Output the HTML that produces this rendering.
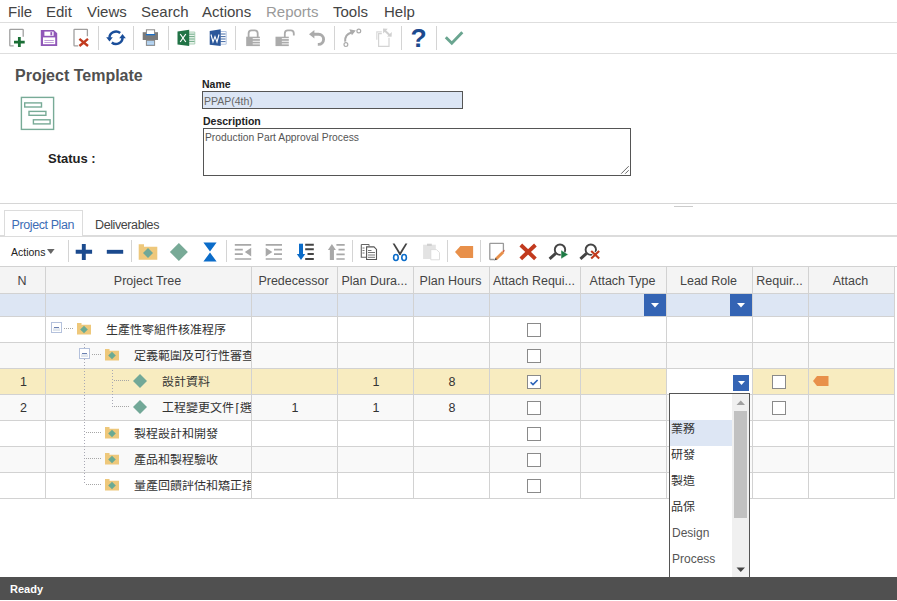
<!DOCTYPE html>
<html lang="zh-TW"><head><meta charset="utf-8">
<style>
*{margin:0;padding:0;box-sizing:border-box}
html,body{width:897px;height:601px;overflow:hidden;background:#fff;font-family:"Liberation Sans",sans-serif;color:#444}
.a{position:absolute}
.t{position:absolute;white-space:nowrap;line-height:1}
.hl{position:absolute;height:1px;background:#dcdcdc}
.vl{position:absolute;width:1px;background:#d0d0d0}
.sep{position:absolute;width:1px;background:#d4d4d4}
svg{position:absolute;overflow:visible}
.cb{position:absolute;width:14px;height:14px;border:1.5px solid #8a8a8a;background:#fff}
.cj{position:absolute;white-space:nowrap;line-height:1;font-size:12px;color:#333;overflow:hidden;font-weight:300}
</style></head><body>

<div class="t" style="left:8px;top:4px;font-size:15px;color:#444">File</div>
<div class="t" style="left:46px;top:4px;font-size:15px;color:#444">Edit</div>
<div class="t" style="left:87px;top:4px;font-size:15px;color:#444">Views</div>
<div class="t" style="left:141px;top:4px;font-size:15px;color:#444">Search</div>
<div class="t" style="left:202px;top:4px;font-size:15px;color:#444">Actions</div>
<div class="t" style="left:266px;top:4px;font-size:15px;color:#9a9a9a">Reports</div>
<div class="t" style="left:333px;top:4px;font-size:15px;color:#444">Tools</div>
<div class="t" style="left:384px;top:4px;font-size:15px;color:#444">Help</div>
<div class="hl" style="left:0;top:22px;width:897px;background:#dedede"></div>
<div class="sep" style="left:98px;top:26px;height:24px"></div>
<div class="sep" style="left:133px;top:26px;height:24px"></div>
<div class="sep" style="left:168px;top:26px;height:24px"></div>
<div class="sep" style="left:235px;top:26px;height:24px"></div>
<div class="sep" style="left:334px;top:26px;height:24px"></div>
<div class="sep" style="left:401px;top:26px;height:24px"></div>
<div class="sep" style="left:436px;top:26px;height:24px"></div>

<svg style="left:0;top:0" width="897" height="60">
<!-- new -->
<path d="M13.7 45.8 H10.4 Q9.8 45.8 9.8 45.2 V29.9 Q9.8 29.3 10.4 29.3 H22.6 Q23.2 29.3 23.2 29.9 V36.7" fill="none" stroke="#a0a0a0" stroke-width="1.3"/>
<path d="M14 42.1 H24.7 M19.35 37 V46.9" stroke="#1a6e35" stroke-width="2.8"/>
<!-- save -->
<path d="M40.8 30 H53.8 L57.2 33.2 V46 H40.8 Z" fill="#9058b8"/>
<rect x="44.4" y="31.6" width="9.2" height="4.2" fill="#fff"/>
<rect x="50.4" y="32.1" width="1.8" height="3.2" fill="#9058b8"/>
<rect x="43" y="37.4" width="12.2" height="6.8" fill="#fff"/>
<path d="M44.4 40.5 H53.8 M44.4 42.5 H53.8" stroke="#c0a0d8" stroke-width="1"/>
<!-- close -->
<path d="M78.2 45.8 H74.6 Q74 45.8 74 45.2 V29.9 Q74 29.3 74.6 29.3 H86.8 Q87.4 29.3 87.4 29.9 V36.3" fill="none" stroke="#a0a0a0" stroke-width="1.3"/>
<path d="M79.4 38.8 L88 46 M88 38.8 L79.4 46" stroke="#c23a1e" stroke-width="2.4"/>
<!-- sync -->
<path d="M120.2 32.95 A6.5 6.2 0 0 0 109.5 37.7" fill="none" stroke="#1a4e9a" stroke-width="2.5"/>
<path d="M106.2 37.2 L112.8 37.2 L109.5 41.6 Z" fill="#1a4e9a"/>
<path d="M111.8 42.45 A6.5 6.2 0 0 0 122.5 37.7" fill="none" stroke="#1a4e9a" stroke-width="2.5"/>
<path d="M119.2 38.2 L125.8 38.2 L122.5 33.9 Z" fill="#1a4e9a"/>
<!-- printer -->
<rect x="142.7" y="32.2" width="15.3" height="7.8" fill="#7a7a7a"/>
<rect x="146.4" y="29.8" width="8.2" height="5" fill="#fff" stroke="#8a8a8a" stroke-width="1"/>
<rect x="145.9" y="34" width="9.2" height="1.3" fill="#1a6fc8"/>
<rect x="146.4" y="40.4" width="8.2" height="5" fill="#8ebbe6" stroke="#8a8a8a" stroke-width="1"/>
<path d="M147 42 H154 M147 43.8 H154" stroke="#fff" stroke-width="0.6"/>
<!-- excel -->
<path d="M188.5 32 H194.8 V44 H188.5 Z" fill="#e9f3ec" stroke="#9cc7ab" stroke-width="0.8"/>
<path d="M189 34.2 H194.5 M189 36.6 H194.5 M189 39 H194.5 M189 41.4 H194.5" stroke="#5fa27a" stroke-width="0.9"/>
<path d="M177.5 31.4 L189.2 29.7 V46 L177.5 44.4 Z" fill="#217346"/>
<path d="M180.2 34 L185.8 42 M185.8 34 L180.2 42" stroke="#fff" stroke-width="1.2"/>
<!-- word -->
<path d="M220 31.5 H226.2 V44.2 H220 Z" fill="#fff" stroke="#9fb6dc" stroke-width="0.8"/>
<path d="M220.5 34 H225.5 M220.5 36.6 H225.5 M220.5 39 H225.5 M220.5 41.6 H225.5" stroke="#2b579a" stroke-width="0.9"/>
<path d="M209.7 31 L220.7 29.3 V46 L209.7 44.7 Z" fill="#2b579a"/>
<path d="M211 34.5 L213 42 L215 36.5 L217 42 L219 34.5" fill="none" stroke="#fff" stroke-width="1.1"/>
<!-- lock -->
<path d="M248.6 37 V33.4 Q248.6 30.4 251.6 30.4 H254.7 Q257.7 30.4 257.7 33.4 V37" fill="none" stroke="#ababab" stroke-width="1.8"/>
<rect x="246.2" y="36.7" width="13.7" height="9.4" fill="#ababab"/>
<path d="M252.7 38.6 H260 M252.7 41.3 H260 M252.7 43.9 H260" stroke="#fff" stroke-width="0.9"/>
<!-- unlock -->
<path d="M284.8 37 V33.4 Q284.8 30.4 287.8 30.4 H290.8 Q293.8 30.4 293.8 33.4 V35.4" fill="none" stroke="#ababab" stroke-width="1.8"/>
<rect x="275.5" y="36.7" width="13.3" height="9.4" fill="#ababab"/>
<path d="M281.8 38.6 H289 M281.8 41.3 H289 M281.8 43.9 H289" stroke="#fff" stroke-width="0.9"/>
<!-- undo -->
<path d="M313 34.2 H318.5 A5.1 5.1 0 0 1 318.5 44.4 H317.8" fill="none" stroke="#ababab" stroke-width="2.9"/>
<path d="M309 34.2 L314.4 30 V38.4 Z" fill="#ababab"/>
<!-- redo link -->
<circle cx="345.9" cy="44.6" r="1.9" fill="none" stroke="#ababab" stroke-width="1.2"/>
<circle cx="358.8" cy="31" r="1.9" fill="none" stroke="#ababab" stroke-width="1.2"/>
<path d="M345.2 41.6 Q344.6 34.6 351.4 32.6" fill="none" stroke="#ababab" stroke-width="2.1"/>
<path d="M349.3 29.2 L355.8 30.4 L351.9 35.3 Z" fill="#ababab"/>
<!-- paste-like disabled -->
<path d="M376.8 39.8 V31.8 H381.8" fill="none" stroke="#dadada" stroke-width="1.2"/>
<path d="M381.8 33.6 H378.6 V46.4 H389 V37.8" fill="none" stroke="#d4d4d4" stroke-width="1.2"/>
<path d="M384.5 30.2 L390 35.5" stroke="#d0d0d0" stroke-width="2"/>
<path d="M383 28.6 L387.8 28.8 L383.2 33.4 Z M391.8 32 L391.6 36.8 L387 36.6 Z" fill="#d0d0d0"/>
<!-- check -->
<path d="M445.8 37.2 L451.8 43.2 L462.3 32.2" fill="none" stroke="#6aa590" stroke-width="2.9"/>
</svg>
<div class="t" style="left:410.5px;top:25px;font-size:26.5px;font-weight:bold;color:#1c4a8e">?</div>

<div class="hl" style="left:0;top:53px;width:897px;background:#dedede"></div>

<div class="t" style="left:15px;top:68px;font-size:16px;font-weight:bold;color:#505050">Project Template</div>
<svg style="left:0;top:0" width="60" height="140">
<rect x="21.4" y="97.4" width="32.2" height="32" fill="none" stroke="#78ab97" stroke-width="1.4"/>
<rect x="24.7" y="102.9" width="16.8" height="4.1" fill="none" stroke="#78ab97" stroke-width="1.4"/>
<rect x="29" y="111.4" width="16.9" height="3.9" fill="none" stroke="#78ab97" stroke-width="1.4"/>
<rect x="33.4" y="119.8" width="16.7" height="4.1" fill="none" stroke="#78ab97" stroke-width="1.4"/>
</svg>
<div class="t" style="left:48px;top:152px;font-size:13px;font-weight:bold;color:#222">Status :</div>
<div class="t" style="left:202px;top:79px;font-size:10.5px;font-weight:bold;color:#222">Name</div>
<div class="a" style="left:202px;top:91px;width:261px;height:18px;background:#dce6f5;border:1px solid #555"></div>
<div class="t" style="left:204px;top:96px;font-size:10.5px;color:#666">PPAP(4th)</div>
<div class="t" style="left:203px;top:116px;font-size:10.5px;font-weight:bold;color:#222">Description</div>
<div class="a" style="left:203px;top:128px;width:428px;height:48px;background:#fff;border:1px solid #555"></div>
<svg style="left:620px;top:165px" width="10" height="10"><path d="M1.2 8.7 L8.7 1.2 M5.2 8.7 L8.7 5.2" stroke="#666" stroke-width="1"/></svg>
<div class="t" style="left:205px;top:133px;font-size:10.3px;color:#555">Production Part Approval Process</div>
<div class="hl" style="left:0;top:203px;width:897px;background:#d6d6d6"></div>
<div class="hl" style="left:674px;top:206px;width:19px;background:#ccc"></div>


<div class="a" style="left:4px;top:210px;width:79px;height:27px;border:1px solid #dcdcdc;border-bottom:none;background:#fff"></div>
<div class="t" style="left:11.5px;top:219px;font-size:12.5px;letter-spacing:-0.4px;color:#3d6db5">Project Plan</div>
<div class="t" style="left:95px;top:219px;font-size:12.5px;letter-spacing:-0.4px;color:#444">Deliverables</div>
<div class="a" style="left:0;top:235px;width:897px;height:2px;background:#dcdcdc"></div>
<div class="a" style="left:5px;top:235px;width:77px;height:1px;background:#fff"></div>

<div class="t" style="left:11px;top:247px;font-size:10.5px;color:#222">Actions</div>
<div class="sep" style="left:68px;top:240px;height:22px"></div>
<div class="sep" style="left:131px;top:240px;height:22px"></div>
<div class="sep" style="left:226px;top:240px;height:22px"></div>
<div class="sep" style="left:352px;top:240px;height:22px"></div>
<div class="sep" style="left:447px;top:240px;height:22px"></div>
<div class="sep" style="left:480px;top:240px;height:22px"></div>

<svg style="left:0;top:0" width="897" height="270">
<path d="M47 249 H54.6 L50.8 254 Z" fill="#666"/>
<!-- plus minus -->
<path d="M75.7 251.8 H92.1 M83.8 244 V260" stroke="#1b4a8e" stroke-width="3.9"/>
<path d="M106.8 251.8 H123.2" stroke="#1b4a8e" stroke-width="3.9"/>
<!-- folder -->
<path d="M138.7 244.3 H144 V246.7 H157.3 V259.7 H138.7 Z" fill="#eec87b"/>
<path d="M148 248 L153 253 L148 258 L143 253 Z" fill="#6fa898"/>
<!-- diamond -->
<path d="M178.9 243 L187.9 252 L178.9 261 L169.9 252 Z" fill="#78aa97"/>
<!-- hourglass -->
<path d="M203.4 242.5 H216.6 L210 251.4 Z M210 252.6 L216.6 261.5 H203.4 Z" fill="#0b6cc9"/>
<!-- outdent -->
<path d="M234.8 244.9 H251.2 M234.8 249.7 H242.8 M234.8 254.2 H242.8 M234.8 259 H251.2" stroke="#a8a8a8" stroke-width="1.7"/>
<path d="M244.8 252 L251.2 247.7 V256.4 Z" fill="#a8a8a8"/>
<!-- indent -->
<path d="M265.7 244.9 H282 M274 249.7 H282 M274 254.2 H282 M265.7 259 H282" stroke="#a8a8a8" stroke-width="1.7"/>
<path d="M272.4 252 L265.7 247.7 V256.4 Z" fill="#a8a8a8"/>
<!-- move down -->
<path d="M301 243.7 V255" stroke="#0b6cc9" stroke-width="4"/>
<path d="M296.8 254 H305.2 L301 260 Z" fill="#0b6cc9"/>
<path d="M305.2 244.8 H313.8 M305.2 249.2 H313.8 M307.5 254 H313.8 M305.2 259 H313.8" stroke="#444" stroke-width="1.9"/>
<!-- move up -->
<path d="M331.9 249 V260" stroke="#a8a8a8" stroke-width="4.1"/>
<path d="M327.9 250 H335.9 L331.9 244.1 Z" fill="#a8a8a8"/>
<path d="M336.4 244.8 H344.7 M338.5 249.6 H344.7 M336.4 254.3 H344.7 M336.4 259 H344.7" stroke="#a8a8a8" stroke-width="1.7"/>
<!-- copy -->
<path d="M361.3 244.5 H368.5 L369.5 245.5 M361.3 244.5 V257.2 H366" fill="none" stroke="#666" stroke-width="1.1"/>
<path d="M362.5 248 H364.5 M362.5 250.5 H364.5 M362.5 253 H364.5" stroke="#666" stroke-width="0.9"/>
<path d="M366.6 246.9 H374 L376.5 249.4 V259.5 H366.6 Z" fill="#fff" stroke="#555" stroke-width="1.1"/>
<path d="M368 250.5 H371.5 M368 252.5 H375 M368 255 H375 M368 257.3 H375" stroke="#666" stroke-width="0.9"/>
<!-- scissors -->
<path d="M392.6 243.6 L394.6 243.4 L401.2 254.2 L399.6 255.2 Z" fill="#444"/>
<path d="M407.4 243.6 L405.4 243.4 L398.8 254.2 L400.4 255.2 Z" fill="#444"/>
<ellipse cx="395.9" cy="257.5" rx="2.3" ry="3" fill="none" stroke="#0b6cc9" stroke-width="1.6"/>
<ellipse cx="404.1" cy="257.5" rx="2.3" ry="3" fill="none" stroke="#0b6cc9" stroke-width="1.6"/>
<!-- paste disabled -->
<rect x="423.1" y="244.7" width="12.7" height="14.3" fill="#e3e3e3"/>
<rect x="427" y="243.7" width="4.8" height="2.3" fill="#d0d0d0"/>
<path d="M430.8 249.6 H436.5 L439.5 252.6 V259.8 H430.8 Z" fill="#fff" stroke="#dadada" stroke-width="0.9"/>
<!-- tag -->
<path d="M455 252 L460.4 246 H473.1 V257.9 H460.4 Z" fill="#e8904a"/>
<!-- edit -->
<path d="M494.5 259.5 H490.2 Q489.8 259.5 489.8 259.1 V243.8 Q489.8 243.4 490.2 243.4 H503 Q503.4 243.4 503.4 243.8 V250" fill="none" stroke="#9a9a9a" stroke-width="1.3"/>
<path d="M495.8 259.2 L503.2 252" stroke="#e8904a" stroke-width="2.9"/>
<path d="M502.4 250.8 L504.6 249.8 L504 252.5 Z" fill="#c0391b"/>
<path d="M494.3 260.4 L495.8 257.8 L497 259.4 Z" fill="#444"/>
<!-- red x -->
<path d="M520.8 245 L535.4 258.8 M535.4 245 L520.8 258.8" stroke="#c23a1e" stroke-width="3.9"/>
<!-- search go -->
<circle cx="560" cy="249.7" r="5.2" fill="none" stroke="#444" stroke-width="1.9"/>
<path d="M549.6 258.8 L555.8 253.4" stroke="#444" stroke-width="3"/>
<path d="M561 250 L568.3 254.5 L561 259 Z" fill="#1d7a44" stroke="#fff" stroke-width="0.5"/>
<!-- search x -->
<circle cx="590.8" cy="249.7" r="5.2" fill="none" stroke="#444" stroke-width="1.9"/>
<path d="M580.4 258.8 L586.6 253.4" stroke="#444" stroke-width="3"/>
<path d="M591.2 251 L599.2 258.4 M599.2 251 L591.2 258.4" stroke="#fff" stroke-width="3.4"/>
<path d="M591.2 251 L599.2 258.4 M599.2 251 L591.2 258.4" stroke="#c0391b" stroke-width="2.1"/>
</svg>

<div class="a" style="left:0;top:266px;width:894px;height:27px;background:#f4f4f4"></div>
<div class="a" style="left:0;top:293px;width:894px;height:23px;background:#dde6f4"></div>
<div class="a" style="left:0;top:317px;width:894px;height:25px;background:#fff"></div>
<div class="a" style="left:0;top:343px;width:894px;height:25px;background:#f9f9f9"></div>
<div class="a" style="left:0;top:369px;width:894px;height:25px;background:#f8ecc0"></div>
<div class="a" style="left:0;top:395px;width:894px;height:25px;background:#f9f9f9"></div>
<div class="a" style="left:0;top:421px;width:894px;height:25px;background:#fff"></div>
<div class="a" style="left:0;top:447px;width:894px;height:25px;background:#f9f9f9"></div>
<div class="a" style="left:0;top:473px;width:894px;height:25px;background:#fff"></div>
<div class="hl" style="left:0;top:266px;width:897px;background:#d2d2d2"></div>
<div class="hl" style="left:0;top:293px;width:895px;background:#d2d2d2"></div>
<div class="hl" style="left:0;top:316px;width:895px;background:#d2d2d2"></div>
<div class="hl" style="left:0;top:342px;width:895px;background:#d2d2d2"></div>
<div class="hl" style="left:0;top:368px;width:895px;background:#d2d2d2"></div>
<div class="hl" style="left:0;top:394px;width:895px;background:#d2d2d2"></div>
<div class="hl" style="left:0;top:420px;width:895px;background:#d2d2d2"></div>
<div class="hl" style="left:0;top:446px;width:895px;background:#d2d2d2"></div>
<div class="hl" style="left:0;top:472px;width:895px;background:#d2d2d2"></div>
<div class="hl" style="left:0;top:498px;width:895px;background:#d2d2d2"></div>
<div class="vl" style="left:45px;top:266px;height:233px;background:#d2d2d2"></div>
<div class="vl" style="left:251px;top:266px;height:233px;background:#d2d2d2"></div>
<div class="vl" style="left:337px;top:266px;height:233px;background:#d2d2d2"></div>
<div class="vl" style="left:413px;top:266px;height:233px;background:#d2d2d2"></div>
<div class="vl" style="left:489px;top:266px;height:233px;background:#d2d2d2"></div>
<div class="vl" style="left:580px;top:266px;height:233px;background:#d2d2d2"></div>
<div class="vl" style="left:666px;top:266px;height:233px;background:#d2d2d2"></div>
<div class="vl" style="left:752px;top:266px;height:233px;background:#d2d2d2"></div>
<div class="vl" style="left:808px;top:266px;height:233px;background:#d2d2d2"></div>
<div class="vl" style="left:894px;top:266px;height:233px;background:#d2d2d2"></div>
<div class="t" style="left:0px;top:275px;width:44px;text-align:center;font-size:12.5px;color:#444">N</div>
<div class="t" style="left:45px;top:275px;width:205px;text-align:center;font-size:12.5px;color:#444">Project Tree</div>
<div class="t" style="left:251px;top:275px;width:85px;text-align:center;font-size:12.5px;color:#444">Predecessor</div>
<div class="t" style="left:337px;top:275px;width:75px;text-align:center;font-size:12.5px;color:#444">Plan Dura...</div>
<div class="t" style="left:413px;top:275px;width:75px;text-align:center;font-size:12.5px;color:#444">Plan Hours</div>
<div class="t" style="left:489px;top:275px;width:90px;text-align:center;font-size:12.5px;color:#444">Attach Requi...</div>
<div class="t" style="left:580px;top:275px;width:85px;text-align:center;font-size:12.5px;color:#444">Attach Type</div>
<div class="t" style="left:666px;top:275px;width:85px;text-align:center;font-size:12.5px;color:#444">Lead Role</div>
<div class="t" style="left:752px;top:275px;width:55px;text-align:center;font-size:12.5px;color:#444">Requir...</div>
<div class="t" style="left:808px;top:275px;width:85px;text-align:center;font-size:12.5px;color:#444">Attach</div>
<div class="a" style="left:644px;top:294px;width:22px;height:22px;background:#3464b4"></div>
<svg style="left:651px;top:303px" width="8" height="5"><path d="M0 0 H8 L4 4.5 Z" fill="#fff"/></svg>
<div class="a" style="left:730px;top:294px;width:22px;height:22px;background:#3464b4"></div>
<svg style="left:737px;top:303px" width="8" height="5"><path d="M0 0 H8 L4 4.5 Z" fill="#fff"/></svg>
<div class="a" style="left:51px;top:322px;width:11px;height:11px;border:1px solid #b4c1dc;background:#fff"></div><div class="a" style="left:53px;top:325px;width:7px;height:6px;background:linear-gradient(#fff 0 40%,#e4e9f0 60%,#dde3ea)"></div><div class="a" style="left:54px;top:327px;width:5px;height:1px;background:#6a80b0"></div>
<div class="a" style="left:64px;top:328px;width:10px;height:1px;background:repeating-linear-gradient(90deg,#a6a6a6 0 1px,transparent 1px 2px)"></div>
<svg style="left:77px;top:323px" width="14" height="12"><path d="M0 0 H4.5 V1.8 H14 V11.5 H0 Z" fill="#eec87b"/><path d="M7 2.8 L10.8 6.5 L7 10.3 L3.2 6.5 Z" fill="#6aaa94"/></svg>
<div class="cj" style="left:106px;top:324px;width:145px">生產性零組件核准程序</div>
<div class="a" style="left:84px;top:344px;width:1px;height:141px;background:repeating-linear-gradient(180deg,#a8a8b4 0 1px,transparent 1px 3px)"></div>
<div class="a" style="left:79px;top:348px;width:11px;height:11px;border:1px solid #b4c1dc;background:#fff"></div><div class="a" style="left:81px;top:351px;width:7px;height:6px;background:linear-gradient(#fff 0 40%,#e4e9f0 60%,#dde3ea)"></div><div class="a" style="left:82px;top:353px;width:5px;height:1px;background:#6a80b0"></div>
<div class="a" style="left:92px;top:354px;width:10px;height:1px;background:repeating-linear-gradient(90deg,#a6a6a6 0 1px,transparent 1px 2px)"></div>
<svg style="left:105px;top:349px" width="14" height="12"><path d="M0 0 H4.5 V1.8 H14 V11.5 H0 Z" fill="#eec87b"/><path d="M7 2.8 L10.8 6.5 L7 10.3 L3.2 6.5 Z" fill="#6aaa94"/></svg>
<div class="cj" style="left:134px;top:350px;width:117px">定義範圍及可行性審查</div>
<div class="a" style="left:112px;top:370px;width:1px;height:37px;background:repeating-linear-gradient(180deg,#a8a8b4 0 1px,transparent 1px 3px)"></div>
<div class="a" style="left:114px;top:380px;width:15px;height:1px;background:repeating-linear-gradient(90deg,#a6a6a6 0 1px,transparent 1px 2px)"></div>
<svg style="left:133px;top:374px" width="14" height="14"><path d="M7 0 L14 7 L7 14 L0 7 Z" fill="#72a898"/></svg>
<div class="cj" style="left:162px;top:376px;width:89px">設計資料</div>
<div class="t" style="left:1px;top:376px;width:45px;text-align:center;font-size:12.5px;color:#333">1</div>
<div class="t" style="left:338px;top:376px;width:76px;text-align:center;font-size:12.5px;color:#333">1</div>
<div class="t" style="left:414px;top:376px;width:76px;text-align:center;font-size:12.5px;color:#333">8</div>
<div class="a" style="left:114px;top:406px;width:15px;height:1px;background:repeating-linear-gradient(90deg,#a6a6a6 0 1px,transparent 1px 2px)"></div>
<svg style="left:133px;top:400px" width="14" height="14"><path d="M7 0 L14 7 L7 14 L0 7 Z" fill="#72a898"/></svg>
<div class="cj" style="left:162px;top:402px;width:89px">工程變更文件<span style='padding:0 1.5px'>[</span>選擇性]</div>
<div class="t" style="left:1px;top:402px;width:45px;text-align:center;font-size:12.5px;color:#333">2</div>
<div class="t" style="left:252px;top:402px;width:86px;text-align:center;font-size:12.5px;color:#333">1</div>
<div class="t" style="left:338px;top:402px;width:76px;text-align:center;font-size:12.5px;color:#333">1</div>
<div class="t" style="left:414px;top:402px;width:76px;text-align:center;font-size:12.5px;color:#333">8</div>
<div class="a" style="left:86px;top:432px;width:15px;height:1px;background:repeating-linear-gradient(90deg,#a6a6a6 0 1px,transparent 1px 2px)"></div>
<svg style="left:105px;top:427px" width="14" height="12"><path d="M0 0 H4.5 V1.8 H14 V11.5 H0 Z" fill="#eec87b"/><path d="M7 2.8 L10.8 6.5 L7 10.3 L3.2 6.5 Z" fill="#6aaa94"/></svg>
<div class="cj" style="left:134px;top:428px;width:117px">製程設計和開發</div>
<div class="a" style="left:86px;top:458px;width:15px;height:1px;background:repeating-linear-gradient(90deg,#a6a6a6 0 1px,transparent 1px 2px)"></div>
<svg style="left:105px;top:453px" width="14" height="12"><path d="M0 0 H4.5 V1.8 H14 V11.5 H0 Z" fill="#eec87b"/><path d="M7 2.8 L10.8 6.5 L7 10.3 L3.2 6.5 Z" fill="#6aaa94"/></svg>
<div class="cj" style="left:134px;top:454px;width:117px">產品和製程驗收</div>
<div class="a" style="left:86px;top:484px;width:15px;height:1px;background:repeating-linear-gradient(90deg,#a6a6a6 0 1px,transparent 1px 2px)"></div>
<svg style="left:105px;top:479px" width="14" height="12"><path d="M0 0 H4.5 V1.8 H14 V11.5 H0 Z" fill="#eec87b"/><path d="M7 2.8 L10.8 6.5 L7 10.3 L3.2 6.5 Z" fill="#6aaa94"/></svg>
<div class="cj" style="left:134px;top:480px;width:117px">量產回饋評估和矯正措施</div>
<div class="cb" style="left:527px;top:323px"></div>
<div class="cb" style="left:527px;top:349px"></div>
<div class="cb" style="left:527px;top:375px"></div><svg style="left:527px;top:375px" width="14" height="14"><path d="M3.6 7.2 L6 9.6 L10.6 5" fill="none" stroke="#2a62b8" stroke-width="1.6"/></svg>
<div class="cb" style="left:527px;top:401px"></div>
<div class="cb" style="left:527px;top:427px"></div>
<div class="cb" style="left:527px;top:453px"></div>
<div class="cb" style="left:527px;top:479px"></div>
<div class="cb" style="left:772px;top:375px"></div>
<div class="cb" style="left:772px;top:401px"></div>
<svg style="left:813px;top:376px" width="16" height="10"><path d="M0 5 L4 0 H15.5 V10 H4 Z" fill="#e8904a"/></svg>
<div class="a" style="left:667px;top:369px;width:85px;height:25px;background:#fff"></div>
<div class="a" style="left:733px;top:375px;width:16px;height:16px;background:#3464b4"></div>
<svg style="left:737.5px;top:381px" width="8" height="5"><path d="M0 0 H7 L3.5 4 Z" fill="#fff"/></svg>
<div class="a" style="left:669px;top:393px;width:81px;height:184px;background:#fff;border:1px solid #555;border-bottom:none"></div>
<div class="a" style="left:670px;top:420px;width:62px;height:26px;background:#dde6f4"></div>
<div class="a" style="left:732px;top:394px;width:17px;height:183px;background:#f0f0f0"></div>
<div class="a" style="left:734px;top:411px;width:13px;height:107px;background:#c1c1c1"></div>
<svg style="left:736px;top:400px" width="10" height="6"><path d="M0.5 5 H9 L4.75 0.5 Z" fill="#a0a0a0"/></svg>
<svg style="left:736px;top:567px" width="10" height="6"><path d="M0.5 0.5 H9 L4.75 5 Z" fill="#444"/></svg>
<div class="cj" style="left:671px;top:423px;font-size:12px;color:#333">業務</div>
<div class="cj" style="left:671px;top:449px;font-size:12px;color:#333">研發</div>
<div class="cj" style="left:671px;top:475px;font-size:12px;color:#333">製造</div>
<div class="cj" style="left:671px;top:501px;font-size:12px;color:#333">品保</div>
<div class="t" style="left:672px;top:527px;font-size:12px;color:#555">Design</div>
<div class="t" style="left:672px;top:553px;font-size:12px;color:#555">Process</div>
<div class="a" style="left:0;top:577px;width:897px;height:22.5px;background:#505050"></div>
<div class="t" style="left:10px;top:584px;font-size:11px;font-weight:bold;color:#fff">Ready</div>
</body></html>
